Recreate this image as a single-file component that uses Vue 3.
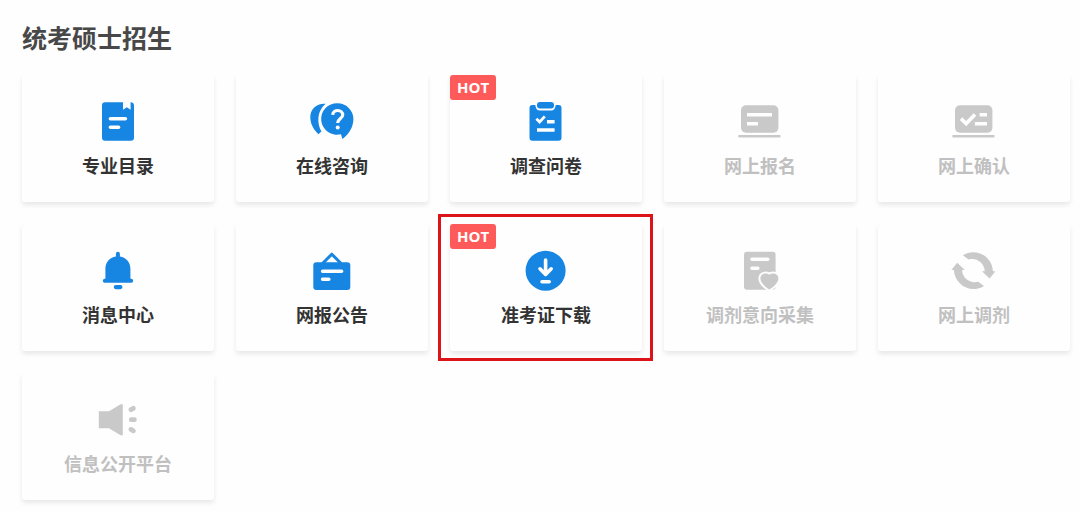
<script setup>
const services = [
  { label: '专业目录', icon: 'book' },
  { label: '在线咨询', icon: 'chat' },
  { label: '调查问卷', icon: 'survey', hot: true },
  { label: '网上报名', icon: 'signup', disabled: true },
  { label: '网上确认', icon: 'confirm', disabled: true },
  { label: '消息中心', icon: 'bell' },
  { label: '网报公告', icon: 'notice' },
  { label: '准考证下载', icon: 'download', hot: true, marked: true },
  { label: '调剂意向采集', icon: 'wish', disabled: true },
  { label: '网上调剂', icon: 'transfer', disabled: true },
  { label: '信息公开平台', icon: 'speaker', disabled: true },
]
</script>

<template>
  <main class="page">
    <h1 class="title">统考硕士招生</h1>
    <div class="grid">
      <button
        v-for="s in services"
        :key="s.icon"
        type="button"
        class="card"
        :class="{ marked: s.marked }"
        :disabled="s.disabled"
      >
        <span v-if="s.hot" class="badge">HOT</span>
        <svg class="icon" viewBox="0 0 48 48" aria-hidden="true">
          <g v-if="s.icon === 'book'">
            <path class="fill" d="M11 5.3H29V12.8L32.8 10.2L36.6 12.8V5.3H37.5Q40 5.8 40 8.3V40.7Q40 43.7 37 43.7H11Q8 43.7 8 40.7V8.3Q8 5.3 11 5.3Z" />
            <path class="cut round" d="M16.4 21.7H31.4M16.4 30.3H24.6" />
          </g>
          <g v-else-if="s.icon === 'chat'">
            <path class="fill" d="M17.6 6.8C9 6 2.3 12 2.3 20C2.3 27.5 6.2 33 10.4 37.2L13.4 34.6C8.4 25.5 9.4 13.5 17.6 6.8Z" />
            <path class="fill" d="M29.5 6.3A15.9 15.7 0 0 1 45.4 22C45.4 30.5 40.4 37.6 34.4 42L33 37.2A15.9 15.7 0 1 1 29.5 6.3Z" />
            <path class="cut question" d="M24.7 17.8C25.1 11.9 34.7 12.2 34.7 18C34.7 21.6 29.7 21.6 29.7 26" />
            <circle class="paper" cx="29.7" cy="30.4" r="2" />
          </g>
          <g v-else-if="s.icon === 'survey'">
            <path class="fill" d="M10.5 8H13.3Q13.8 13.6 18 13.6H29Q33.2 13.6 33.7 8H36.5Q39.5 8 39.5 11V40.7Q39.5 43.7 36.5 43.7H10.5Q7.5 43.7 7.5 40.7V11Q7.5 8 10.5 8Z" />
            <rect class="fill" x="15" y="5" width="17" height="6.6" rx="3" />
            <path class="cut thin" d="M14.4 21.8L17.6 25L22.8 19.4" />
            <path class="cut" d="M25 24.7H32.6M15 33H32.6" />
          </g>
          <g v-else-if="s.icon === 'signup'">
            <rect class="fill" x="5" y="8.3" width="37.4" height="27.4" rx="5" />
            <path class="cut" d="M11 17.7H36M11 26.7H22" />
            <path class="line" d="M2.4 39.3H44.4" />
          </g>
          <g v-else-if="s.icon === 'confirm'">
            <rect class="fill" x="5" y="8.3" width="37.4" height="27.4" rx="5" />
            <path class="cut" d="M11 21.6L16.2 26.6L25 17.4M29.6 17.7H37M24.8 26.7H37" />
            <path class="line" d="M2.4 39.3H44.4" />
          </g>
          <g v-else-if="s.icon === 'bell'">
            <path class="fill" d="M23.9 5.8Q25.9 5.8 25.9 8V10.5C32.5 11.5 36.4 16.5 36.4 23V32.8H37.6Q39.2 33.2 39.2 34.8Q39.2 36.7 37.2 36.7H10.6Q8.8 36.7 8.8 34.8Q8.8 33.2 10.4 32.8H11.4V23C11.4 16.5 15.3 11.5 21.9 10.5V8Q21.9 5.8 23.9 5.8Z" />
            <rect class="fill" x="19.7" y="38.9" width="8.8" height="4.3" rx="2.1" />
          </g>
          <g v-else-if="s.icon === 'notice'">
            <path class="hook" d="M14.5 17.5L23.8 8.2L33.1 17.5" />
            <rect class="fill" x="5.3" y="16.3" width="37" height="27.6" rx="3" />
            <path class="cut round" d="M14.6 25.3H33.6M14.6 33.3H20.8" />
          </g>
          <g v-else-if="s.icon === 'download'">
            <circle class="fill" cx="23.6" cy="24.7" r="20" />
            <path class="cut round" d="M23.6 14V28.2M18 22.8L23.6 28.4L29.2 22.8M20 35.7H27.2" />
          </g>
          <g v-else-if="s.icon === 'wish'">
            <rect class="fill" x="8" y="5.7" width="31.6" height="38" rx="3" />
            <path class="cut round" d="M16 13.3H31.8M16 22.3H21.8" />
            <path class="heart" d="M33.4 43.6C30.5 41.8 24.4 37.4 24.4 32.6C24.4 27.4 30.4 26.3 33.4 28.8C36.4 26.3 42.4 27.4 42.4 32.6C42.4 37.4 36.3 41.8 33.4 43.6Z" />
          </g>
          <g v-else-if="s.icon === 'transfer'">
            <path class="fill" d="M12.8 9.3C26 .9 42.4 10.5 42.9 25.2H45.4L39.6 32.4L32 25.2H34.8C34.2 16.5 26.5 11.5 18.6 13.4Z" />
            <path class="fill" transform="rotate(180 23.4 24.6)" d="M12.8 9.3C26 .9 42.4 10.5 42.9 25.2H45.4L39.6 32.4L32 25.2H34.8C34.2 16.5 26.5 11.5 18.6 13.4Z" />
          </g>
          <g v-else>
            <path class="fill" d="M4.8 16.3H15L26.6 9.2H28.8V40.2H26.6L15 33.3H4.8Z" />
            <path class="sound" d="M36.9 14.7L39.4 13.3M37.3 24.7H40.4M36.9 34.4L39.4 35.8" />
          </g>
        </svg>
        <span class="label">{{ s.label }}</span>
      </button>
    </div>
  </main>
</template>

<style>
body {
  margin: 0;
  background: #fefefe;
}
</style>

<style scoped>
.page {
  padding: 19px 10px 12px 22px;
  font-family: "Noto Sans CJK SC", "Open Sans", sans-serif;
}
.title {
  margin: 0 0 20px;
  font-size: 25px;
  line-height: 36px;
  font-weight: 700;
  color: #484848;
}
.grid {
  display: grid;
  grid-template-columns: repeat(5, minmax(0, 1fr));
  gap: 22px;
}
.card {
  --tone: #1785e2;
  position: relative;
  display: flex;
  flex-direction: column;
  align-items: center;
  padding: 22px 0 24px;
  border: 0;
  border-radius: 3px;
  background: #fefefe;
  box-shadow: 0 3px 5px rgba(0, 0, 0, 0.09);
  font: inherit;
  color: #333;
  cursor: pointer;
}
.card:disabled {
  --tone: #c9c9c9;
  color: #c0c0c0;
  cursor: default;
}
.marked::after {
  content: "";
  position: absolute;
  inset: -10px -11px -10px -12px;
  border: 3px solid #dc141a;
  pointer-events: none;
}
.badge {
  position: absolute;
  top: 0;
  left: 0;
  padding: 0 7px;
  border-radius: 3px;
  background: #ff5a5a;
  font-family: "Open Sans", sans-serif;
  font-size: 15px;
  line-height: 25px;
  font-weight: 700;
  color: #fff;
}
.icon {
  width: 48px;
  height: 48px;
}
.label {
  margin-top: 7px;
  font-size: 18px;
  line-height: 26px;
  font-weight: 700;
}
.fill {
  fill: var(--tone);
}
.paper {
  fill: #fefefe;
}
.cut {
  fill: none;
  stroke: #fefefe;
  stroke-width: 3.6;
}
.round {
  stroke-linecap: round;
  stroke-linejoin: round;
}
.thin {
  stroke-width: 2.8;
}
.question {
  stroke-width: 3.2;
}
.line {
  stroke: var(--tone);
  stroke-width: 2.4;
}
.hook {
  fill: none;
  stroke: var(--tone);
  stroke-width: 3;
  stroke-linejoin: round;
}
.heart {
  fill: var(--tone);
  stroke: #fefefe;
  stroke-width: 4;
  paint-order: stroke;
}
.sound {
  stroke: var(--tone);
  stroke-width: 4.8;
  stroke-linecap: round;
}
</style>
